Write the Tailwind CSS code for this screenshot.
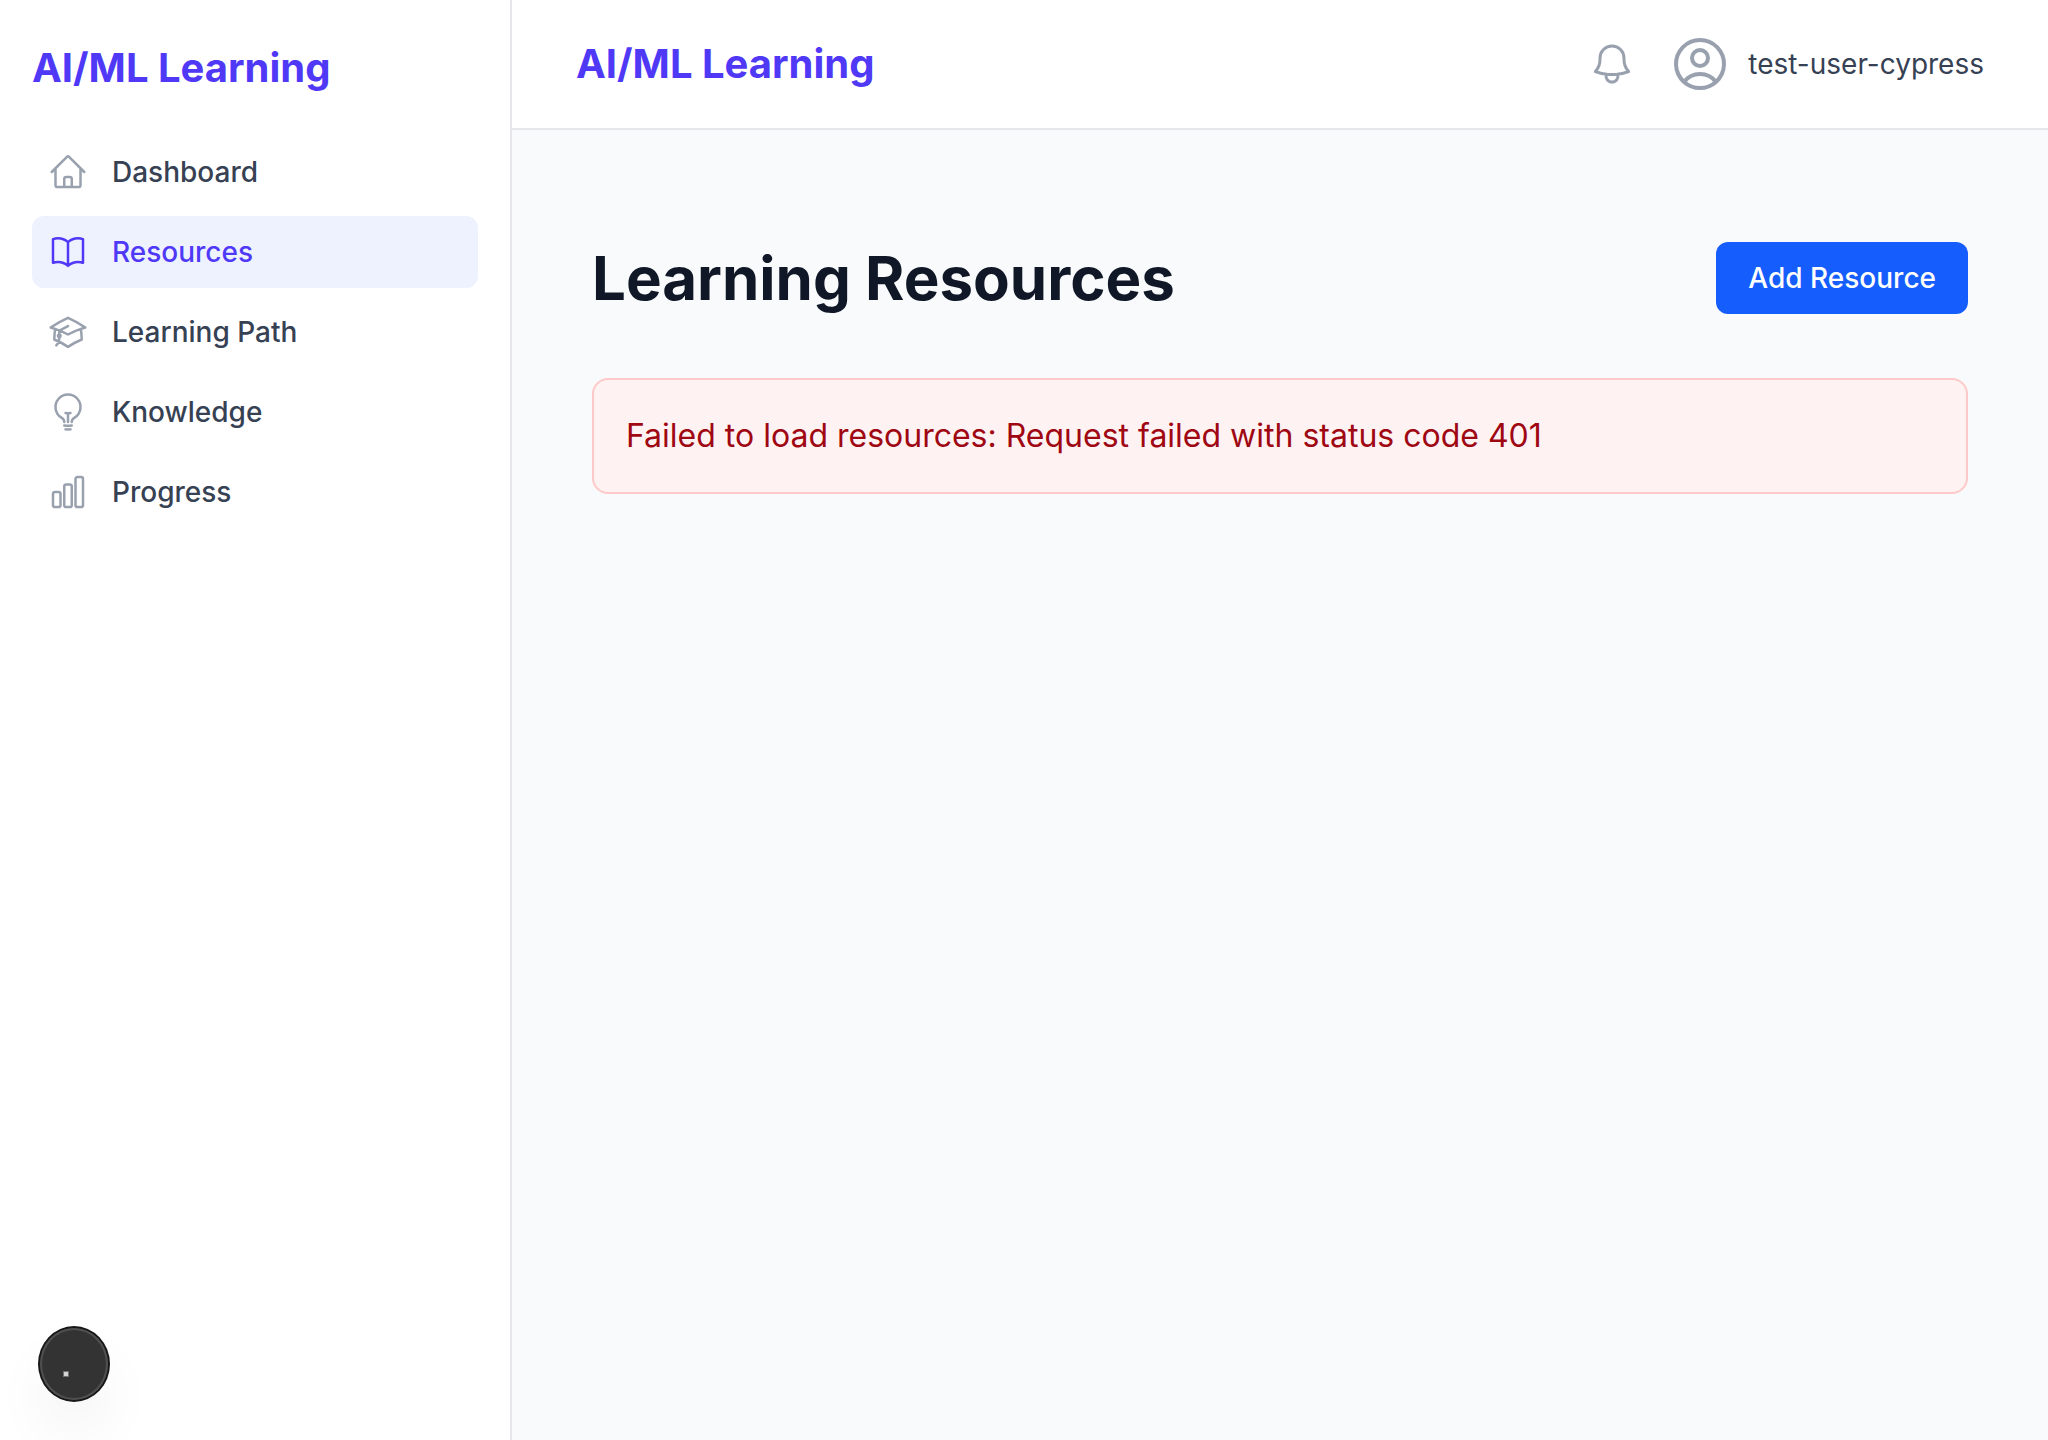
<!DOCTYPE html>
<html lang="en">
<head>
<meta charset="utf-8">
<meta name="viewport" content="width=device-width, initial-scale=1">
<title>AI/ML Learning</title>
<script src="https://cdn.jsdelivr.net/npm/@tailwindcss/browser@4"></script>
</head>
<body class="flex min-h-screen bg-gray-50 font-['Inter',sans-serif] antialiased">
  <aside class="flex w-128 shrink-0 flex-col border-r-2 border-gray-200 bg-white px-8">
    <div class="flex h-34 items-center">
      <a href="#" class="text-[40px] leading-14 font-bold text-indigo-600">AI/ML Learning</a>
    </div>
    <nav aria-label="Main">
      <ul class="flex flex-col gap-2 text-[28px] leading-10 font-medium text-gray-700">
        <li>
          <a href="#" class="flex items-center gap-6 rounded-xl p-4">
            <svg class="size-10 shrink-0 text-gray-400" viewBox="0 0 24 24" fill="none" stroke="currentColor" stroke-width="1.5" stroke-linecap="round" stroke-linejoin="round" aria-hidden="true"><path d="m2.25 12 8.954-8.955c.44-.439 1.152-.439 1.591 0L21.75 12M4.5 9.75v10.125c0 .621.504 1.125 1.125 1.125H9.75v-4.875c0-.621.504-1.125 1.125-1.125h2.25c.621 0 1.125.504 1.125 1.125V21h4.125c.621 0 1.125-.504 1.125-1.125V9.75M8.25 21h8.25"/></svg>
            Dashboard
          </a>
        </li>
        <li>
          <a href="#" aria-current="page" class="flex items-center gap-6 rounded-xl bg-indigo-50 p-4 text-indigo-600">
            <svg class="size-10 shrink-0" viewBox="0 0 24 24" fill="none" stroke="currentColor" stroke-width="1.5" stroke-linecap="round" stroke-linejoin="round" aria-hidden="true"><path d="M12 6.042A8.967 8.967 0 0 0 6 3.75c-1.052 0-2.062.18-3 .512v14.25A8.987 8.987 0 0 1 6 18c2.305 0 4.408.867 6 2.292m0-14.25a8.966 8.966 0 0 1 6-2.292c1.052 0 2.062.18 3 .512v14.25A8.987 8.987 0 0 0 18 18a8.967 8.967 0 0 0-6 2.292m0-14.25v14.25"/></svg>
            Resources
          </a>
        </li>
        <li>
          <a href="#" class="flex items-center gap-6 rounded-xl p-4">
            <svg class="size-10 shrink-0 text-gray-400" viewBox="0 0 24 24" fill="none" stroke="currentColor" stroke-width="1.5" stroke-linecap="round" stroke-linejoin="round" aria-hidden="true"><path d="M4.26 10.147a60.438 60.438 0 0 0-.491 6.347A48.62 48.62 0 0 1 12 20.904a48.62 48.62 0 0 1 8.232-4.41 60.46 60.46 0 0 0-.491-6.347m-15.482 0a50.636 50.636 0 0 0-2.658-.813A59.906 59.906 0 0 1 12 3.493a59.903 59.903 0 0 1 10.399 5.84c-.896.248-1.783.52-2.658.814m-15.482 0A50.717 50.717 0 0 1 12 13.489a50.702 50.702 0 0 1 7.74-3.342M6.75 15a.75.75 0 1 0 0-1.5.75.75 0 0 0 0 1.5Zm0 0v-3.675A55.378 55.378 0 0 1 12 8.443m-7.007 11.55A5.981 5.981 0 0 0 6.75 15.75v-1.5"/></svg>
            Learning Path
          </a>
        </li>
        <li>
          <a href="#" class="flex items-center gap-6 rounded-xl p-4">
            <svg class="size-10 shrink-0 text-gray-400" viewBox="0 0 24 24" fill="none" stroke="currentColor" stroke-width="1.5" stroke-linecap="round" stroke-linejoin="round" aria-hidden="true"><path d="M12 18v-5.25m0 0a6.01 6.01 0 0 0 1.5-.189m-1.5.189a6.01 6.01 0 0 1-1.5-.189m3.75 7.478a12.06 12.06 0 0 1-4.5 0m3.75 2.383a14.406 14.406 0 0 1-3 0M14.25 18v-.192c0-.983.658-1.823 1.508-2.316a7.5 7.5 0 1 0-7.517 0c.85.493 1.509 1.333 1.509 2.316V18"/></svg>
            Knowledge
          </a>
        </li>
        <li>
          <a href="#" class="flex items-center gap-6 rounded-xl p-4">
            <svg class="size-10 shrink-0 text-gray-400" viewBox="0 0 24 24" fill="none" stroke="currentColor" stroke-width="1.5" stroke-linecap="round" stroke-linejoin="round" aria-hidden="true"><path d="M3 13.125C3 12.504 3.504 12 4.125 12h2.25c.621 0 1.125.504 1.125 1.125v6.75C7.5 20.496 6.996 21 6.375 21h-2.25A1.125 1.125 0 0 1 3 19.875v-6.75ZM9.75 8.625c0-.621.504-1.125 1.125-1.125h2.25c.621 0 1.125.504 1.125 1.125v11.25c0 .621-.504 1.125-1.125 1.125h-2.25a1.125 1.125 0 0 1-1.125-1.125V8.625ZM16.5 4.125c0-.621.504-1.125 1.125-1.125h2.25C20.496 3 21 3.504 21 4.125v15.75c0 .621-.504 1.125-1.125 1.125h-2.25a1.125 1.125 0 0 1-1.125-1.125V4.125Z"/></svg>
            Progress
          </a>
        </li>
      </ul>
    </nav>
  </aside>

  <div class="flex min-w-0 grow flex-col">
    <header class="flex items-center justify-between border-b-2 border-gray-200 bg-white px-16 py-8">
      <a href="#" class="text-[40px] leading-14 font-bold text-indigo-600">AI/ML Learning</a>
      <div class="flex items-center gap-8">
        <button type="button" aria-label="Notifications" class="text-gray-400">
          <svg class="size-12" viewBox="0 0 24 24" fill="none" stroke="currentColor" stroke-width="1.5" stroke-linecap="round" stroke-linejoin="round" aria-hidden="true"><path d="M14.857 17.082a23.848 23.848 0 0 0 5.454-1.31A8.967 8.967 0 0 1 18 9.75V9A6 6 0 0 0 6 9v.75a8.967 8.967 0 0 1-2.312 6.022c1.733.64 3.56 1.085 5.455 1.31m5.714 0a24.255 24.255 0 0 1-5.714 0m5.714 0a3 3 0 1 1-5.714 0"/></svg>
        </button>
        <div class="flex items-center gap-4">
          <svg class="size-16 text-gray-400" viewBox="0 0 24 24" fill="none" stroke="currentColor" stroke-width="1.5" stroke-linecap="round" stroke-linejoin="round" aria-hidden="true"><path d="M17.982 18.725A7.488 7.488 0 0 0 12 15.75a7.488 7.488 0 0 0-5.982 2.975m11.963 0a9 9 0 1 0-11.963 0m11.963 0A8.966 8.966 0 0 1 12 21a8.966 8.966 0 0 1-5.982-2.275M15 9.75a3 3 0 1 1-6 0 3 3 0 0 1 6 0Z"/></svg>
          <span class="text-[28px] leading-10 text-gray-700">test-user-cypress</span>
        </div>
      </div>
    </header>
    <main class="flex flex-col gap-16 px-20 py-28">
      <div class="flex items-center justify-between">
        <h1 class="text-6xl leading-18 font-bold text-gray-900">Learning Resources</h1>
        <button type="button" class="rounded-xl bg-blue-600 px-8 py-4 text-[28px] leading-10 font-medium text-white">Add Resource</button>
      </div>
      <p role="alert" class="rounded-2xl border-2 border-red-200 bg-red-50 p-8 text-[32px] leading-12 text-red-800">Failed to load resources: Request failed with status code 401</p>
    </main>
  </div>

  <button type="button" aria-label="Developer tools" class="fixed bottom-10 left-10 h-18 w-17 rounded-[50%] bg-[#333] shadow-[0_0_0_2px_#171717,inset_0_0_0_2px_#505050,0_32px_64px_-16px_rgba(0,0,0,0.16)]">
    <span class="absolute bottom-6 left-6 size-1 bg-neutral-300 outline outline-neutral-500"></span>
  </button>
</body>
</html>
